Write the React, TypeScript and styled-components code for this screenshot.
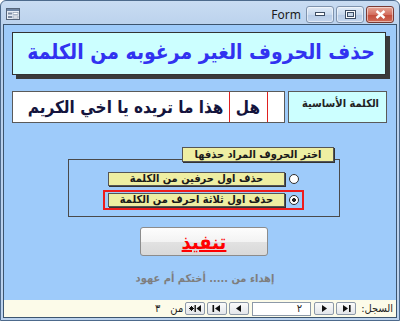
import React from "react";
import styled, { createGlobalStyle } from "styled-components";

const GlobalStyle = createGlobalStyle`
  html, body {
    margin: 0;
    padding: 0;
    background: #ffffff;
  }
  * {
    box-sizing: border-box;
  }
`;

const arabic = `"DejaVu Sans Condensed", "DejaVu Sans", sans-serif`;

const Window = styled.div`
  width: 400px;
  height: 321px;
  border: 1px solid #4d6a8c;
  border-radius: 6px 6px 0 0;
  background: linear-gradient(#c9dcf2, #b8d0ec 30px, #bcd3ee);
  display: flex;
  flex-direction: column;
  padding: 0 2px 2px;
  overflow: hidden;
`;

const TitleBar = styled.div`
  height: 23px;
  display: flex;
  align-items: center;
  padding: 0 3px 0 3px;
  flex-shrink: 0;
`;

const TitleText = styled.span`
  margin-left: auto;
  margin-right: 3px;
  font: 12px "Noto Sans", "Liberation Sans", sans-serif;
  color: #1b1b1b;
  margin-top: 4px;
`;

const CaptionButton = styled.div<{ $close?: boolean }>`
  width: 28px;
  height: 17px;
  margin-left: 2px;
  margin-top: 3px;
  border: 1px solid ${(p) => (p.$close ? "#7a3a33" : "#7f93ad")};
  border-radius: 3px;
  display: flex;
  align-items: center;
  justify-content: center;
  background: ${(p) =>
    p.$close
      ? "linear-gradient(#e6a697, #d46f5f 50%, #c24a3a 51%, #cf6a55)"
      : "linear-gradient(#e2ecf8, #c8d9ee 50%, #b6cbe6 51%, #c5d7ee)"};
  box-shadow: inset 0 0 0 1px rgba(255, 255, 255, 0.5);
`;

const Body = styled.div`
  flex: 1;
  border: 1px solid #3c556f;
  display: flex;
  flex-direction: column;
  min-height: 0;
`;

const Client = styled.div`
  height: 275px;
  background: #9ecbfa;
  display: flex;
  flex-direction: column;
  align-items: flex-start;
  flex-shrink: 0;
`;

const Heading = styled.div`
  margin: 7px 0 0 8px;
  width: 374px;
  height: 43px;
  border: 1px solid #333;
  background: #ccffff;
  box-shadow: 4px 4px 0 #3a3a3a;
  display: flex;
  align-items: center;
  justify-content: center;
  font: bold 21px ${arabic};
  color: #3232f0;
  white-space: nowrap;
  padding: 0 0 4px 4px;
`;

const WordRow = styled.div`
  margin: 16px 0 0 8px;
  display: flex;
  gap: 3px;
  height: 32px;
`;

const WordBox = styled.div`
  width: 273px;
  background: #ffffff;
  border: 1px solid #5a5a5a;
  direction: rtl;
  display: flex;
  align-items: stretch;
  padding-right: 16px;
  font: bold 17px ${arabic};
  color: #14143c;
  white-space: nowrap;
  overflow: hidden;
`;

const Highlight = styled.span`
  border: 1px solid #e02020;
  padding: 0 7px 0 6px;
  margin: -1px 0;
  display: flex;
  align-items: center;
`;

const Rest = styled.span`
  display: flex;
  align-items: center;
`;

const WordLabel = styled.div`
  width: 99px;
  background: #ccffff;
  border: 1px solid #5a5a5a;
  direction: rtl;
  padding: 5px 7px 0 0;
  font: bold 11px ${arabic};
  color: #222;
  white-space: nowrap;
`;

const Group = styled.div`
  margin: 36px 0 0 64px;
  width: 272px;
  height: 58px;
  border: 1px solid #4a4a4a;
  display: flex;
  flex-direction: column;
  align-items: flex-end;
`;

const Legend = styled.div`
  margin: -13px 5px 0 0;
  width: 152px;
  height: 15px;
  background: #eeeea2;
  border: 1px solid #555;
  box-shadow: 1px 1px 0 #333;
  direction: rtl;
  text-align: center;
  font: bold 11px/13px ${arabic};
  color: #1a1a1a;
  white-space: nowrap;
`;

const OptionRow = styled.div<{ $marked?: boolean }>`
  margin: ${(p) => (p.$marked ? "1px" : "7px")} 35px 0 0;
  width: 201px;
  height: 20px;
  border: 2px solid ${(p) => (p.$marked ? "#ee1c1c" : "transparent")};
  direction: rtl;
  display: flex;
  align-items: center;
  padding: 0 3px;
  gap: 4px;
`;

const Radio = styled.span<{ $checked?: boolean }>`
  width: 10px;
  height: 10px;
  border-radius: 50%;
  border: 1px solid #2e2e2e;
  background: ${(p) =>
    p.$checked
      ? "radial-gradient(circle, #222 0 1.6px, #fff 2.2px)"
      : "#ffffff"};
  flex-shrink: 0;
`;

const OptionLabel = styled.div`
  flex: 1;
  height: 14px;
  background: #eeeea2;
  border: 1px solid #555;
  box-shadow: 1px 1px 0 #333;
  text-align: center;
  font: bold 11px/12px ${arabic};
  color: #1a1a1a;
  white-space: nowrap;
`;

const RunButton = styled.button`
  margin: 10px 0 0 136px;
  width: 128px;
  height: 29px;
  border: 1px solid #8c8c8c;
  border-radius: 3px;
  background: linear-gradient(#fdfdfd, #f3f3f3 50%, #e2e2e2 51%, #d9d9d9);
  color: #ff0000;
  font: bold 20px ${arabic};
  text-decoration: underline;
  padding: 0;
  cursor: pointer;
`;

const Dedication = styled.div`
  margin: 16px 0 0 116px;
  width: 170px;
  text-align: center;
  direction: rtl;
  font: bold 11px ${arabic};
  color: #7e7e7e;
  white-space: nowrap;
`;

const StatusBar = styled.div`
  height: 17px;
  background: #fcfbe9;
  direction: rtl;
  display: flex;
  align-items: center;
  padding-right: 3px;
  gap: 2px;
  font: 11px ${arabic};
  color: #222;
`;

const NavCaption = styled.span`
  margin-left: 3px;
`;

const NavButton = styled.div`
  width: 20px;
  height: 13px;
  border: 1px solid #8d99a8;
  border-radius: 2px;
  background: linear-gradient(#fbfbfb, #e3e6ea);
  display: flex;
  align-items: center;
  justify-content: center;
`;

const NavField = styled.div`
  width: 59px;
  height: 14px;
  margin: 0 1px;
  background: #fff;
  border: 1px solid #8d99a8;
  font: 11px/12px ${arabic};
  padding-right: 8px;
`;

const NavCount = styled.span`
  margin-right: 8px;
`;

type NavKind = "first" | "prev" | "next" | "last" | "new";

const NavIcon = ({ kind }: { kind: NavKind }) => (
  <svg width="12" height="9" viewBox="0 0 12 9">
    {kind === "first" && (
      <>
        <path d="M3 1 L8 4.5 L3 8 Z" fill="#111" />
        <rect x="9" y="1" width="1.6" height="7" fill="#111" />
      </>
    )}
    {kind === "prev" && <path d="M4 1 L9 4.5 L4 8 Z" fill="#111" />}
    {kind === "next" && <path d="M8 1 L3 4.5 L8 8 Z" fill="#111" />}
    {kind === "last" && (
      <>
        <rect x="1.5" y="1" width="1.6" height="7" fill="#111" />
        <path d="M9 1 L4 4.5 L9 8 Z" fill="#111" />
      </>
    )}
    {kind === "new" && (
      <>
        <path d="M0 4.5 H5 M2.5 2 V7 M0.8 2.8 L4.2 6.2 M4.2 2.8 L0.8 6.2" stroke="#111" strokeWidth="1" />
        <rect x="5.5" y="1" width="1.4" height="7" fill="#111" />
        <path d="M12 1 L7.5 4.5 L12 8 Z" fill="#111" />
      </>
    )}
  </svg>
);

const FormIcon = () => (
  <svg width="14" height="12" viewBox="0 0 14 12" style={{ marginTop: 3 }}>
    <rect x="0.5" y="0.5" width="13" height="11" fill="#e8eef6" stroke="#55657a" />
    <rect x="1" y="1" width="12" height="2" fill="#6d84a3" />
    <rect x="2" y="4.5" width="4" height="2" fill="#7b8aa0" />
    <rect x="7" y="4.5" width="5" height="2" fill="#fff" stroke="#7b8aa0" strokeWidth="0.6" />
    <rect x="2" y="8" width="4" height="2" fill="#7b8aa0" />
    <rect x="7" y="8" width="5" height="2" fill="#fff" stroke="#7b8aa0" strokeWidth="0.6" />
  </svg>
);

export default function App() {
  return (
    <>
      <GlobalStyle />
      <Window>
        <TitleBar>
          <FormIcon />
          <TitleText>Form</TitleText>
          <CaptionButton>
            <svg width="10" height="6" viewBox="0 0 10 6">
              <rect x="0.5" y="1.5" width="9" height="3" fill="#fff" stroke="#3d4d63" />
            </svg>
          </CaptionButton>
          <CaptionButton>
            <svg width="11" height="9" viewBox="0 0 11 9">
              <rect x="0.5" y="0.5" width="10" height="8" fill="#fff" stroke="#3d4d63" />
              <rect x="2.5" y="2.5" width="6" height="4" fill="#c9d7e8" stroke="#3d4d63" />
            </svg>
          </CaptionButton>
          <CaptionButton $close>
            <svg width="11" height="9" viewBox="0 0 11 9">
              <path d="M1.5 1 L9.5 8 M9.5 1 L1.5 8" stroke="#fff" strokeWidth="2.4" />
            </svg>
          </CaptionButton>
        </TitleBar>
        <Body>
          <Client>
            <Heading dir="rtl">حذف الحروف الغير مرغوبه من الكلمة</Heading>
            <WordRow>
              <WordBox>
                <Highlight>هل</Highlight>
                <Rest>&nbsp;هذا ما تريده يا اخي الكريم</Rest>
              </WordBox>
              <WordLabel>الكلمة الأساسية</WordLabel>
            </WordRow>
            <Group>
              <Legend>اختر الحروف المراد حذفها</Legend>
              <OptionRow>
                <Radio />
                <OptionLabel>حذف اول حرفين من الكلمة</OptionLabel>
              </OptionRow>
              <OptionRow $marked>
                <Radio $checked />
                <OptionLabel>حذف اول ثلاثة احرف من الكلمة</OptionLabel>
              </OptionRow>
            </Group>
            <RunButton>تنفيذ</RunButton>
            <Dedication>إهداء من ..... أختكم أم عهود</Dedication>
          </Client>
          <StatusBar>
            <NavCaption>السجل:</NavCaption>
            <NavButton><NavIcon kind="first" /></NavButton>
            <NavButton><NavIcon kind="prev" /></NavButton>
            <NavField>٢</NavField>
            <NavButton><NavIcon kind="next" /></NavButton>
            <NavButton><NavIcon kind="last" /></NavButton>
            <NavButton><NavIcon kind="new" /></NavButton>
            <span>من</span>
            <NavCount>٣</NavCount>
          </StatusBar>
        </Body>
      </Window>
    </>
  );
}
